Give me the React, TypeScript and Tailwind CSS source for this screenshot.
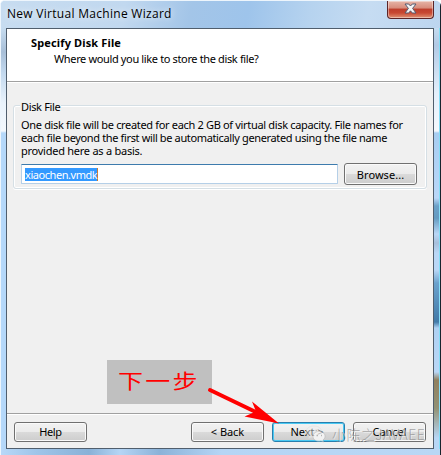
import type { ReactNode } from "react";

const base = "font-['Noto_Sans',sans-serif] text-[11px] leading-[13px] whitespace-nowrap";
const ui = `${base} tracking-[-0.34px] text-black`;
const label = `${base} tracking-[-0.05px] text-black`;

function Button({ children, primary = false, className = "h-[20px]" }: { children: ReactNode; primary?: boolean; className?: string }) {
  const frame = primary
    ? "border-[#287fae] shadow-[inset_0_0_0_1px_#49c9f3]"
    : "border-[#707070] shadow-[inset_0_0_0_1px_#fafafa]";
  return (
    <button
      className={`flex w-[73px] shrink-0 items-center justify-center rounded-[3px] border bg-[linear-gradient(#f2f2f2_0%,#ebebeb_49%,#dadada_50%,#cdcdcd_100%)] ${frame} ${className}`}
    >
      {children}
    </button>
  );
}

function TitleBar() {
  return (
    <header className="flex h-7 shrink-0 justify-between bg-[linear-gradient(100deg,#c7dcf0_0%,#c1d8ef_28%,#a3c5e8_43%,#9ec4eb_56%,#b6d3ef_70%,#c6dcf2_83%,#bcd5ef_100%)] pl-[6px]">
      <h1 className="pt-[4px] font-['Open_Sans',sans-serif] text-[12px] leading-[17px] tracking-[0.29px] whitespace-nowrap text-black [text-shadow:0_0_7px_white]">
        New Virtual Machine Wizard
      </h1>
      <button className="mr-[7px] flex h-[18px] w-[47px] items-center justify-center rounded-b-[4px] border border-t-0 border-[#5c2427] bg-[linear-gradient(#e6b5a8_0%,#d78b7b_42%,#bd3e2c_47%,#c84832_70%,#df9274_100%)] shadow-[inset_0_0_0_1px_#ffffff66]">
        <svg className="-mt-[2px]" width="13" height="11" viewBox="0 0 13 11">
          <path d="M1 1H4.700L6.500 3L8.300 1H12L8.600 5.400L12 10H8.300L6.500 7.800L4.700 10H1L4.400 5.400Z" fill="#f5f5f5" stroke="#555a70" strokeWidth="1" />
        </svg>
      </button>
    </header>
  );
}

function DiskFile() {
  return (
    <section className="mx-[6px] mt-[22px] h-[84px] rounded-[3px] border border-[#d5dfe5] pl-[7px] shadow-[inset_0_0_0_1px_white,0_1px_0_white]">
      <h3 className={`${ui} relative -top-[6px] -ml-px w-[41px] bg-[#f0f0f0] pl-px`}>Disk File</h3>
      <p className={`${base} -mt-px h-[39px] text-black`}>
        <span className="block tracking-[-0.33px]">One disk file will be created for each 2 GB of virtual disk capacity. File names for</span>
        <span className="block tracking-[-0.36px]">each file beyond the first will be automatically generated using the file name</span>
        <span className="block tracking-[-0.25px]">provided here as a basis.</span>
      </p>
      <div className="mt-[6px] flex gap-[6px]">
        <div className="mt-px flex h-5 w-[317px] shrink-0 items-center rounded-[1px] border border-[#b5cfe7] border-t-[#3d7bad] bg-white pl-[3px]">
          <span className={`${base} h-[13px] border-r border-[#c97a37] bg-[#3399ff] tracking-[-0.44px] text-white`}>xiaochen.vmdk</span>
        </div>
        <Button className="h-[22px]"><span className={`${base} tracking-[0.05px] text-black`}>Browse...</span></Button>
      </div>
    </section>
  );
}

function Annotation() {
  return (
    <>
      <div className="absolute top-[359px] left-[106px] h-11 w-[105px] bg-[#c0c0c0] pt-[6px] pl-[11px]">
        <span className="block origin-center scale-y-[.82] font-['Noto_Sans_CJK_SC',sans-serif] text-[25px] leading-7 tracking-[2.2px] whitespace-nowrap text-[#ff0000]">下一步</span>
      </div>
      <svg className="absolute top-[379px] left-[199px]" width="90" height="50" viewBox="0 0 90 50">
        <path d="M10 10L62 35" stroke="#ff0000" strokeWidth="4" strokeLinecap="round" />
        <path d="M52 21.500L79 43.500L44.500 36.500L56 31.500Z" fill="#ff0000" />
      </svg>
    </>
  );
}

function Watermark() {
  return (
    <div className="absolute top-[424px] left-[305px] flex items-center">
      <svg width="20" height="18" viewBox="0 0 20 18" opacity=".72">
        <path d="M8 1C3 1 0 4 0 7C0 9 1 10.500 3 12L2.300 14L5 12.700Q7 13.200 9 12.800C15 12 16 9 15.500 6C15 3 12 1 8 1Z" fill="#efefef" fillOpacity=".7" stroke="#d4d4d4" strokeWidth=".5" />
        <path d="M13 6.500C9 6.500 7 9 7 11.500C7 15 11 17 15 16L17.500 17L17 15C21 12 19 6.500 13 6.500Z" fill="#ffffff" stroke="#aaaaaa" strokeWidth=".6" />
        <path d="M4.500 5.500H6M9.500 5.500H11M10.500 10.500H12M15 10.500H16" stroke="#aaaaaa" strokeWidth="1.400" />
      </svg>
      <span className="ml-[6px] font-['Noto_Sans_CJK_SC',sans-serif] text-[14px] leading-[18px] font-light tracking-[0.45px] whitespace-nowrap text-[#858585]/70 [text-shadow:1px_1px_0_#f5f5f5aa]">小陈之JAVAEE</span>
    </div>
  );
}

export default function App() {
  return (
    <main className="relative flex h-[455px] w-[441px] flex-col overflow-hidden rounded-tl-[5px] rounded-tr-[6px] border-t border-l border-[#edf5fc] bg-[#b8d6f5]">
      <div className="absolute inset-y-0 right-0 w-px bg-[#17252d]" />
      <TitleBar />
      <div className="-mt-px flex h-[421px]">
        <div className="w-[5px] shrink-0 bg-[linear-gradient(#c6dcf0_0px,#a8bfd8_24px,#c3d9ef_45px,#eaf3fc_75px,#f3f8fd_103px,#b5d8fa_105px,#b5d8fa_421px)]" />
        <div className="flex w-[428px] shrink-0 flex-col border border-[#505e6d] bg-[#f0f0f0]">
          <header className="h-[53px] shrink-0 border-b border-[#a0a0a0] bg-white pt-[7px] pl-6">
            <h2 className={`${base} font-bold tracking-[0.14px] text-black`}>Specify Disk File</h2>
            <p className={`${base} mt-[3px] pl-[23px] tracking-[-0.36px] text-black`}>Where would you like to store the disk file?</p>
          </header>
          <div className="h-[331px] shrink-0 border-t border-white">
            <DiskFile />
          </div>
          <footer className="flex flex-1 border-t border-[#a0a0a0] pt-2 pr-[7px] pl-[7px] shadow-[inset_0_1px_0_white]">
            <Button><span className={`${ui} -mt-px`}>Help</span></Button>
            <div className="ml-auto flex gap-[8px]">
              <Button><span className={`${label} -mt-px`}>&lt; Back</span></Button>
              <Button primary><span className={`${label} -mt-px -ml-[3px]`}>Next &gt;</span></Button>
              <Button><span className={`${label} -mt-px`}>Cancel</span></Button>
            </div>
          </footer>
        </div>
        <div className="w-[6px] shrink-0 border-r border-[#86def7] bg-[linear-gradient(#c6dcf0_0px,#b2cae5_17px,#e4effb_65px,#f4f8fd_103px,#a7cdf1_105px,#bad7f8_170px,#6ca1c8_178px,#659bc1_190px,#bad7f6_206px,#a7bfdb_215px,#bad7f6_225px,#bad7f6_242px,#6ca2cd_255px,#427aa8_294px,#afd1f3_300px,#bad7f6_344px,#91805f_352px,#929174_380px,#b8d6f5_410px)]" />
      </div>
      <div className="flex-1 bg-[linear-gradient(90deg,#b8d8f8_0%,#9fc5e9_8%,#89b1d7_20%,#b5d5f5_27%,#8bb2d8_36%,#b5d5f5_50%,#b9d7f5_100%)]" />
      <Annotation />
      <Watermark />
    </main>
  );
}
